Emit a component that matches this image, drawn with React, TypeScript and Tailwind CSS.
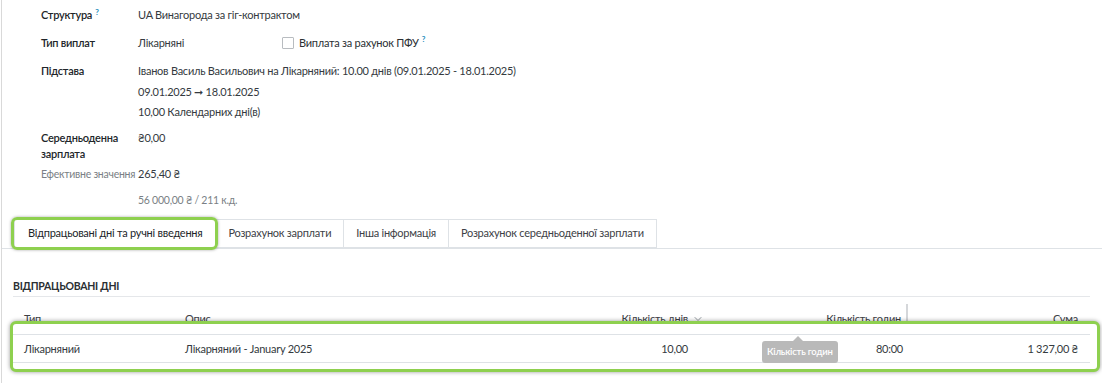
import { ChevronDown } from "lucide-react";

const Help = () => (
  <sup className="ml-[3px] text-[8px] font-bold text-[#2a8fbd]">?</sup>
);

const FormRow = ({
  label,
  children,
  className = "",
  labelClass = "font-semibold text-[#212529]",
}: {
  label: React.ReactNode;
  children: React.ReactNode;
  className?: string;
  labelClass?: string;
}) => (
  <div className={`flex ${className}`}>
    <div className={`w-[97px] shrink-0 ${labelClass}`}>{label}</div>
    <div className="flex-1 text-[#343a40]">{children}</div>
  </div>
);

const tabs = [
  "Розрахунок зарплати",
  "Інша інформація",
  "Розрахунок середньоденної зарплати",
];

export default function App() {
  return (
    <div className="min-h-screen bg-white ml-[1px] border-l border-[#d9d9d9] font-['Lato','Liberation_Sans',sans-serif] text-[11px] tracking-[-0.25px] text-[#212529]">
      {/* form */}
      <div className="pl-[39px] pt-[5px] leading-[20px]">
        <FormRow label={<>Структура<Help /></>}>UA Винагорода за гіг-контрактом</FormRow>

        <FormRow label="Тип виплат" className="mt-[8px]">
          <div className="flex items-center">
            <span className="w-[144px]">Лікарняні</span>
            <span className="w-[12px] h-[12px] border border-[#b8bcc0] rounded-[1px] bg-white" />
            <span className="ml-[5px] text-[#2b2f33]">Виплата за рахунок ПФУ</span>
            <Help />
          </div>
        </FormRow>

        <FormRow label="Підстава" className="mt-[8px]">
          <div className="leading-[20.5px]">
            <div>Іванов Василь Васильович на Лікарняний: 10.00 днів (09.01.2025 - 18.01.2025)</div>
            <div>09.01.2025 ➞ 18.01.2025</div>
            <div>10,00 Календарних дні(в)</div>
          </div>
        </FormRow>

        <div className="flex mt-[5px]">
          <div className="w-[97px] shrink-0 font-semibold leading-[16px] pt-[2px]">
            Середньоденна
            <br />
            зарплата
          </div>
          <div className="flex-1 text-[#343a40]">₴0,00</div>
        </div>

        <FormRow
          label="Ефективне значення"
          className="mt-[2px] items-center"
          labelClass="text-[#7a7f85] text-[10.5px] whitespace-nowrap"
        >
          265,40 ₴
        </FormRow>

        <FormRow label="" className="mt-[6px]">
          <span className="text-[#7a7f85] text-[10.5px]">56 000,00 ₴ / 211 к.д.</span>
        </FormRow>
      </div>

      {/* tabs */}
      <div className="mt-[9px] flex pl-[12px] border-b border-[#dee2e6]">
        <div className="relative">
          <div className="h-[29px] px-[13px] flex items-center border border-[#dee2e6] border-b-white -mb-px bg-white">
            Відпрацьовані дні та ручні введення
          </div>
          <div className="absolute -left-[3px] -top-[2px] -right-[2px] -bottom-[2px] rounded-[6px] border-[3px] border-[#8ed04f] shadow-[0_0_3px_rgba(0,0,0,0.35)]" />
        </div>
        {tabs.map((t) => (
          <div
            key={t}
            className="h-[29px] px-[12px] flex items-center border border-l-0 border-[#dee2e6] text-[#3d4146]"
          >
            {t}
          </div>
        ))}
      </div>

      {/* worked days */}
      <div className="pl-[11px] pr-[12px] pt-[30px]">
        <div className="text-[10.5px] font-bold text-[#2b2f33] pb-[2px] border-b border-[#e5e7ea]">
          ВІДПРАЦЬОВАНІ ДНІ
        </div>

        <div className="mt-[7px] flex h-[29px] items-center text-[#3d4146]">
          <div className="w-[161px] pl-[11px]">Тип</div>
          <div className="w-[276px] pl-[11px]">Опис</div>
          <div className="w-[250px] pr-[12px] flex justify-end items-center">
            <span>Кількість днів</span>
            <ChevronDown className="w-[12px] h-[12px] ml-[4px] -mr-[16px] text-[#6c757d]" strokeWidth={1.5} />
          </div>
          <div className="w-[208px] h-full pr-[5px] flex justify-end items-center border-r-2 border-[#d5d7da]">
            Кількість годин
          </div>
          <div className="flex-1 pr-[12px] text-right">Сума</div>
        </div>

        <div className="relative -mt-[12px] -ml-[3px] -mr-[10px] rounded-[6px] border-[3px] border-[#8ed04f] bg-white shadow-[0_0_4px_rgba(0,0,0,0.4)] pt-[10px] pb-[6px] pr-[7px]">
          <div className="relative flex h-[29px] items-center border-y border-[#dee2e6] text-[#343a40]">
            <div className="w-[161px] pl-[11px]">Лікарняний</div>
            <div className="w-[276px] pl-[11px]">Лікарняний - January 2025</div>
            <div className="w-[250px] pr-[12px] text-right">10,00</div>
            <div className="w-[208px] pr-[5px] text-right">80:00</div>
            <div className="flex-1 pr-[12px] text-right">1 327,00 ₴</div>

            <div className="absolute left-[749px] top-[6px] rounded-[3px] bg-[#b9b9b9] px-[5px] h-[22px] flex items-center text-[9.5px] font-semibold tracking-[-0.2px] text-white">
              Кількість годин
              <span className="absolute left-[31px] -top-[5px] w-0 h-0 border-x-[5px] border-x-transparent border-b-[5px] border-b-[#b9b9b9]" />
            </div>
          </div>
        </div>
      </div>
    </div>
  );
}
